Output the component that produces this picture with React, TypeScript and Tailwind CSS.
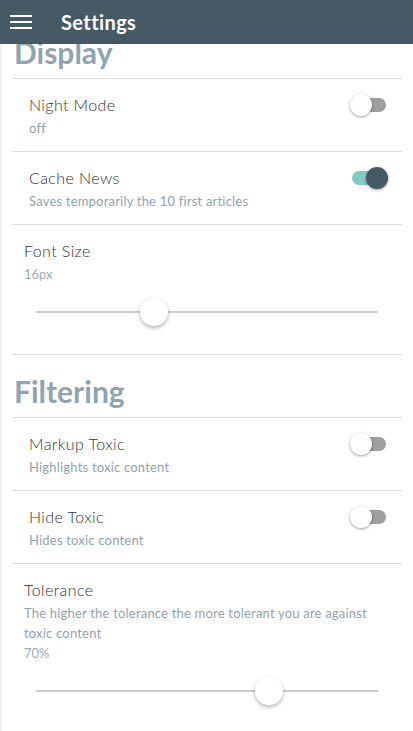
import React from 'react';

const font = { fontFamily: 'Lato, "Liberation Sans", sans-serif' };

const Toggle: React.FC<{ on: boolean }> = ({ on }) => (
  <div className="relative w-[38px] h-[22px] mr-[3px] flex items-center">
    <div className={`h-[14px] w-[34px] mx-auto rounded-full ${on ? 'bg-[#80cbc4]' : 'bg-[#9e9e9e]'}`} />
    <div
      className={`absolute top-0 h-[22px] w-[22px] rounded-full shadow-[0_1px_3px_rgba(0,0,0,0.4)] ${
        on ? 'right-0 bg-[#455a64]' : 'left-0 bg-white'
      }`}
    />
  </div>
);

const Slider: React.FC<{ value: number }> = ({ value }) => (
  <div className="relative mx-[12px] h-[40px] mt-[8px]">
    <div className="absolute left-0 right-0 top-[19px] h-[2px] bg-[#cccccc]" />
    <div
      className="absolute top-[6px] h-[28px] w-[28px] -ml-[14px] rounded-full bg-white shadow-[0_2px_4px_rgba(0,0,0,0.3)]"
      style={{ left: `${value * 100}%` }}
    />
  </div>
);

const SectionTitle: React.FC<{ title: string; first?: boolean }> = ({ title, first }) => (
  <h2
    className={`${first ? '-mt-[10px] pb-[8px]' : 'pt-[18px] pb-[8px]'} pl-[2px] text-[30px] leading-[36px] font-bold text-[#90a4ae] border-b border-[#dddddd]`}
  >
    {title}
  </h2>
);

const ToggleItem: React.FC<{ title: string; sub: string; on?: boolean }> = ({ title, sub, on = false }) => (
  <div className="pl-[17px] pr-[11px] pt-[14px] pb-[13px] border-b border-[#dddddd]">
    <div className="flex items-center justify-between">
      <span className="text-[16px] leading-[24px] font-light tracking-[0.4px] text-[#333333]">{title}</span>
      <Toggle on={on} />
    </div>
    <div className="mt-[1px] text-[13px] leading-[20px] tracking-[0.2px] text-[#90a4ae]">{sub}</div>
  </div>
);

const SliderItem: React.FC<{ title: string; sub?: string; valueLabel: string; value: number; last?: boolean }> = ({
  title,
  sub,
  valueLabel,
  value,
  last,
}) => (
  <div className={`px-[12px] pt-[14px] ${last ? 'pb-[22px]' : 'pb-[22px] border-b border-[#dddddd]'}`}>
    <div className="text-[16px] leading-[24px] font-light tracking-[0.4px] text-[#333333]">{title}</div>
    {sub && <div className="mt-[1px] text-[13px] leading-[20px] tracking-[0.2px] text-[#90a4ae]">{sub}</div>}
    <div className={`${sub ? '' : 'mt-[1px]'} text-[13px] leading-[20px] text-[#a3adb2]`}>{valueLabel}</div>
    <Slider value={value} />
  </div>
);

export default function App() {
  return (
    <div className="w-full h-[731px] flex flex-col bg-white overflow-hidden" style={font}>
      <header className="h-[44px] shrink-0 bg-[#455a64] flex items-center relative z-10">
        <div className="ml-[10px] w-[22px] flex flex-col gap-[4px]">
          <span className="block h-[2px] bg-white" />
          <span className="block h-[2px] bg-white" />
          <span className="block h-[2px] bg-white" />
        </div>
        <h1 className="ml-[29px] text-[20px] font-bold tracking-[0.4px] text-white">Settings</h1>
      </header>
      <main className="flex-1 overflow-hidden border-l-2 border-[#eeeeee] pl-[10px] pr-[11px]">
        <SectionTitle title="Display" first />
        <ToggleItem title="Night Mode" sub="off" />
        <ToggleItem title="Cache News" sub="Saves temporarily the 10 first articles" on />
        <SliderItem title="Font Size" valueLabel="16px" value={0.344} />
        <SectionTitle title="Filtering" />
        <ToggleItem title="Markup Toxic" sub="Highlights toxic content" />
        <ToggleItem title="Hide Toxic" sub="Hides toxic content" />
        <SliderItem
          title="Tolerance"
          sub="The higher the tolerance the more tolerant you are against toxic content"
          valueLabel="70%"
          value={0.682}
          last
        />
      </main>
    </div>
  );
}
